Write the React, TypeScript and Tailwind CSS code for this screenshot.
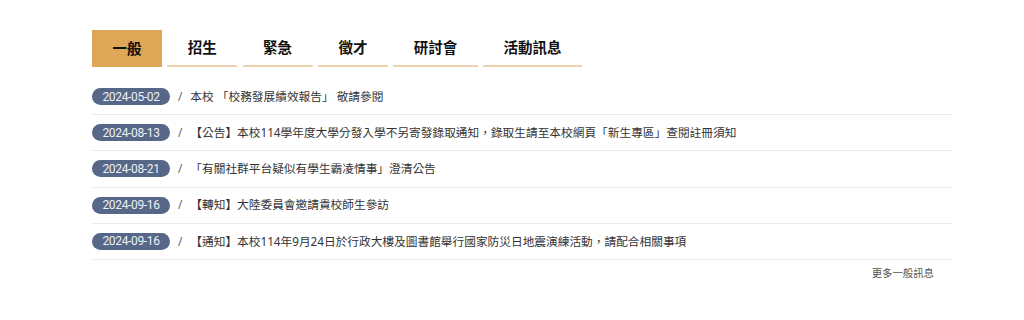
const tabs = ["一般", "招生", "緊急", "徵才", "研討會", "活動訊息"];

const news = [
  { date: "2024-05-02", title: "本校 「校務發展績效報告」 敬請參閱" },
  {
    date: "2024-08-13",
    title:
      "【公告】本校114學年度大學分發入學不另寄發錄取通知，錄取生請至本校網頁「新生專區」查閱註冊須知",
  },
  { date: "2024-08-21", title: "「有關社群平台疑似有學生霸凌情事」澄清公告" },
  { date: "2024-09-16", title: "【轉知】大陸委員會邀請貴校師生參訪" },
  {
    date: "2024-09-16",
    title: "【通知】本校114年9月24日於行政大樓及圖書館舉行國家防災日地震演練活動，請配合相關事項",
  },
];

export default function App() {
  return (
    <div
      className="w-[1024px] h-[320px] bg-white pt-[30px] pl-[92px]"
      style={{ fontFamily: '"Noto Sans", "Noto Sans CJK TC", sans-serif' }}
    >
      <div className="w-[860px]">
        <nav className="flex gap-[5.3px]">
          {tabs.map((t, i) => (
            <div
              key={t}
              className={
                i === 0
                  ? "h-[37px] px-[20.5px] flex items-center bg-[#dea757] text-[14.5px] font-bold text-[#111]"
                  : "h-[37px] px-[20.5px] flex items-center border-b-2 border-[#efd3b0] text-[14.5px] font-bold text-[#111]"
              }
            >
              {t}
            </div>
          ))}
        </nav>

        <ul className="mt-[12px]">
          {news.map((n, i) => (
            <li
              key={i}
              className="h-[36.2px] flex items-center border-b border-[#ececec] text-[11.7px] text-[#333]"
            >
              <span className="h-[17px] w-[78px] flex items-center justify-center rounded-full bg-[#566788] font-['Roboto'] text-[12px] tracking-[-0.35px] text-[#eef1f6]">
                {n.date}
              </span>
              <span className="ml-[8px] mr-[8px] text-[#666]">/</span>
              <span>{n.title}</span>
            </li>
          ))}
        </ul>

        <div className="flex justify-end pr-[18px] mt-[6px]">
          <a className="text-[10.4px] text-[#555]">更多一般訊息</a>
        </div>
      </div>
    </div>
  );
}
